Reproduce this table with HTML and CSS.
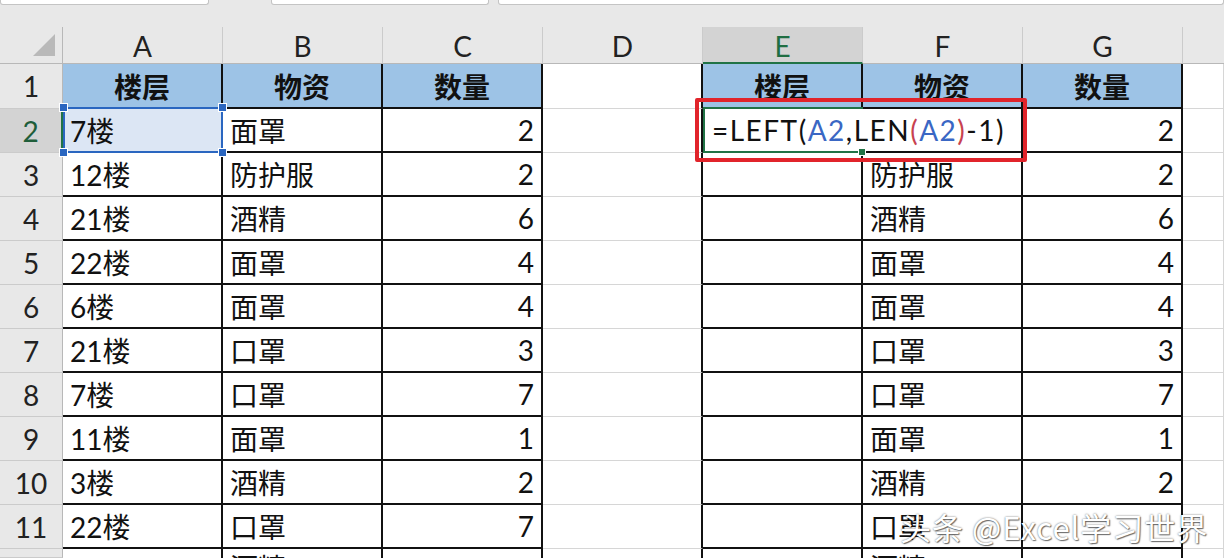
FILE: index.html
```html
<!DOCTYPE html>
<html lang="zh">
<head>
<meta charset="utf-8">
<title>Sheet</title>
<link rel="stylesheet" href="styles.css">
</head>
<body>
<div class="top">
  <div class="box b1"></div>
  <div class="box b2"></div>
  <div class="box b3"></div>
</div>
<div class="sheet">
  <div class="ch corner"><svg class="tri" width="22" height="22" viewBox="0 0 22 22"><polygon points="22,0 22,22 0,22" fill="#b9b9b9"/></svg></div>
  <div class="ch">A</div><div class="ch">B</div><div class="ch">C</div><div class="ch">D</div>
  <div class="ch on">E</div><div class="ch">F</div><div class="ch">G</div><div class="ch end"></div>

  <div class="rh">1</div>
  <div class="c t h">楼层</div><div class="c t h">物资</div><div class="c t h">数量</div><div class="c lb"></div>
  <div class="c t h">楼层</div><div class="c t h">物资</div><div class="c t h">数量</div><div class="c"></div>

  <div class="rh act">2</div>
  <div class="c t sel">7楼<span class="frame"></span><span class="hd tl"></span><span class="hd tr"></span><span class="hd bl"></span><span class="hd br"></span></div>
  <div class="c t">面罩</div><div class="c t n">2</div><div class="c lb"></div>
  <div class="c t edit">
    <div class="ftext">=LEFT(<span class="ref">A2</span>,LEN<span class="par">(</span><span class="ref">A2</span><span class="par">)</span>-1)</div>
    <span class="gframe"></span><span class="ghd"></span>
    <span class="redbox"></span>
  </div>
  <div class="c t"></div><div class="c t n">2</div><div class="c"></div>

  <div class="rh">3</div>
  <div class="c t">12楼</div><div class="c t">防护服</div><div class="c t n">2</div><div class="c lb"></div>
  <div class="c t"></div><div class="c t">防护服</div><div class="c t n">2</div><div class="c"></div>

  <div class="rh">4</div>
  <div class="c t">21楼</div><div class="c t">酒精</div><div class="c t n">6</div><div class="c lb"></div>
  <div class="c t"></div><div class="c t">酒精</div><div class="c t n">6</div><div class="c"></div>

  <div class="rh">5</div>
  <div class="c t">22楼</div><div class="c t">面罩</div><div class="c t n">4</div><div class="c lb"></div>
  <div class="c t"></div><div class="c t">面罩</div><div class="c t n">4</div><div class="c"></div>

  <div class="rh">6</div>
  <div class="c t">6楼</div><div class="c t">面罩</div><div class="c t n">4</div><div class="c lb"></div>
  <div class="c t"></div><div class="c t">面罩</div><div class="c t n">4</div><div class="c"></div>

  <div class="rh">7</div>
  <div class="c t">21楼</div><div class="c t">口罩</div><div class="c t n">3</div><div class="c lb"></div>
  <div class="c t"></div><div class="c t">口罩</div><div class="c t n">3</div><div class="c"></div>

  <div class="rh">8</div>
  <div class="c t">7楼</div><div class="c t">口罩</div><div class="c t n">7</div><div class="c lb"></div>
  <div class="c t"></div><div class="c t">口罩</div><div class="c t n">7</div><div class="c"></div>

  <div class="rh">9</div>
  <div class="c t">11楼</div><div class="c t">面罩</div><div class="c t n">1</div><div class="c lb"></div>
  <div class="c t"></div><div class="c t">面罩</div><div class="c t n">1</div><div class="c"></div>

  <div class="rh">10</div>
  <div class="c t">3楼</div><div class="c t">酒精</div><div class="c t n">2</div><div class="c lb"></div>
  <div class="c t"></div><div class="c t">酒精</div><div class="c t n">2</div><div class="c"></div>

  <div class="rh">11</div>
  <div class="c t">22楼</div><div class="c t">口罩</div><div class="c t n">7</div><div class="c lb"></div>
  <div class="c t"></div><div class="c t">口罩</div><div class="c t n"></div><div class="c"></div>

  <div class="rh last"></div>
  <div class="c t last"></div><div class="c t last">酒精</div><div class="c t n last"></div><div class="c lb last"></div>
  <div class="c t last"></div><div class="c t last">酒精</div><div class="c t n last"></div><div class="c last"></div>
</div>
<div class="watermark">头条 @Excel学习世界</div>
</body>
</html>
```

FILE: styles.css
```css
html, body {
  margin: 0;
  padding: 0;
  background: #fff;
  width: 1224px;
  height: 558px;
  overflow: hidden;
  font-family: Lato, "Noto Sans CJK SC", sans-serif;
  color: #111;
}

.top {
  height: 27px;
  background: #e8e8e8;
  display: flex;
  align-items: flex-start;
}
.box {
  height: 4px;
  background: #fff;
  border: 1px solid #c4c4c4;
  border-top: none;
  border-radius: 0 0 3px 3px;
}
.b1 { width: 207px; margin-left: 0; }
.b2 { width: 216px; margin-left: 62px; }
.b3 { flex: 1; margin-left: 9px; }

.sheet {
  display: grid;
  grid-template-columns: 63px repeat(7, 160px) 1fr;
  grid-template-rows: 37px 45px repeat(10, 44px) 9px;
}

.ch {
  background: #e8e8e8;
  border-right: 1px solid #cbcbcb;
  border-bottom: 1px solid #b8b8b8;
  box-sizing: border-box;
  display: flex;
  align-items: center;
  justify-content: center;
  font-size: 28px;
  color: #222;
  padding-top: 2px;
}
.ch.corner {
  justify-content: flex-end;
  align-items: flex-end;
  padding: 0 7px 7px 0;
  border-right-color: #b8b8b8;
}
.ch.end { border-right: none; }
.ch.on {
  background: #d3d3d3;
  color: #1f6e43;
  border-bottom: 2px solid #217346;
}

.rh {
  background: #e8e8e8;
  border-right: 1px solid #b8b8b8;
  border-bottom: 1px solid #cbcbcb;
  box-sizing: border-box;
  display: flex;
  align-items: center;
  justify-content: center;
  font-size: 28px;
  color: #222;
}
.rh.act {
  background: #d3d3d3;
  color: #1f5e3a;
  border-right: 2px solid #217346;
}

.c {
  border-right: 1px solid #d6d6d6;
  border-bottom: 1px solid #d6d6d6;
  box-sizing: border-box;
  display: flex;
  align-items: center;
  padding: 0 7px;
  font-size: 28px;
  white-space: nowrap;
  overflow: hidden;
  min-width: 0;
}
.c.t {
  border-right: 2px solid #111;
  border-bottom: 2px solid #111;
}
.c.lb { border-right: 2px solid #111; }
.c.h {
  background: #9dc3e6;
  font-weight: bold;
  justify-content: center;
}
.c.n { justify-content: flex-end; }
.c.last {
  align-items: flex-start;
  border-bottom: none;
  padding-top: 5px;
  font-size: 28px;
  line-height: 1;
}

.sel {
  position: relative;
  overflow: visible;
  background: #dce6f4;
  z-index: 2;
}
.frame {
  position: absolute;
  left: 0;
  top: -2px;
  right: -2px;
  bottom: -2px;
  border: 2px solid #2a66c0;
}
.hd {
  position: absolute;
  width: 7px;
  height: 7px;
  background: #2a66c0;
  border: 1px solid #fff;
}
.hd.tl { left: -4px; top: -6px; }
.hd.tr { right: -6px; top: -6px; }
.hd.bl { left: -4px; bottom: -6px; }
.hd.br { right: -6px; bottom: -6px; }

.edit {
  position: relative;
  overflow: visible;
  z-index: 3;
  padding: 0;
}
.ftext {
  position: absolute;
  left: 0;
  top: 0;
  bottom: 0;
  width: 317px;
  background: #fff;
  display: flex;
  align-items: center;
  padding-left: 9px;
  box-sizing: border-box;
  white-space: nowrap;
  letter-spacing: 1.5px;
}
.ref { color: #3a67c4; }
.par { color: #c8424f; }
.gframe {
  position: absolute;
  left: 0;
  top: -2px;
  width: 160px;
  bottom: -2px;
  box-sizing: border-box;
  border: 2px solid #217346;
  border-right: none;
}
.ghd {
  position: absolute;
  left: 155px;
  bottom: -5px;
  width: 6px;
  height: 6px;
  background: #217346;
  border: 1px solid #fff;
}
.redbox {
  position: absolute;
  left: -8px;
  top: -11px;
  width: 332px;
  height: 64px;
  box-sizing: border-box;
  border: 4px solid #e1242b;
  border-radius: 2px;
}

.watermark {
  position: absolute;
  left: 900px;
  top: 504px;
  font-family: "Noto Sans CJK SC", "Liberation Sans", sans-serif;
  font-size: 31px;
  letter-spacing: 1px;
  color: #fff;
  text-shadow: 0 0 2px rgba(0,0,0,0.6), 1px 1px 1px rgba(0,0,0,0.5);
  white-space: nowrap;
  z-index: 5;
}
```
